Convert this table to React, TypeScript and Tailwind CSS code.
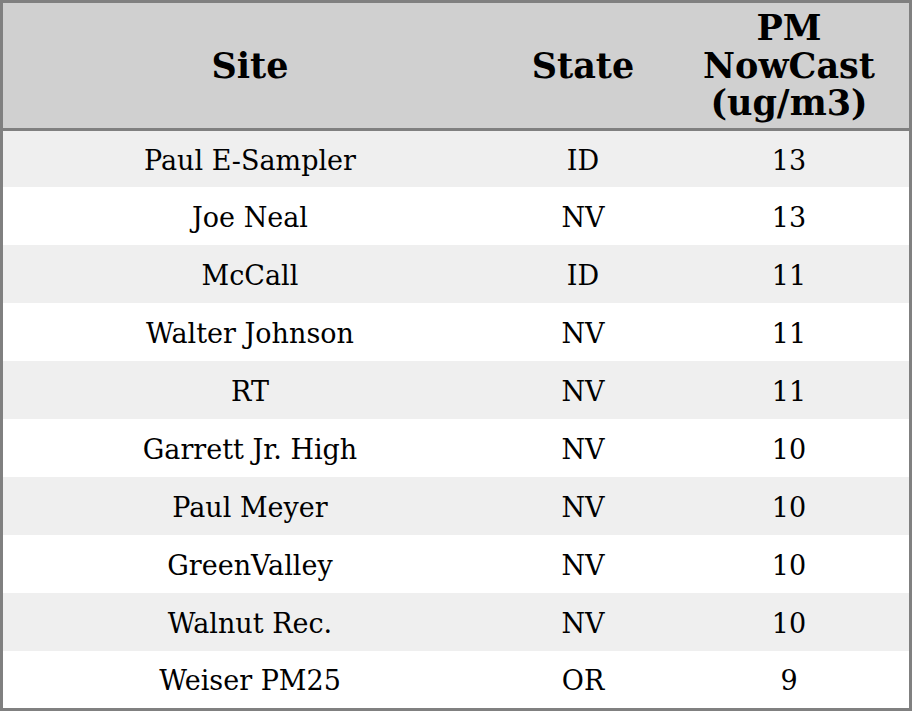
import React from "react";

const rows: [string, string, string][] = [
  ["Paul E-Sampler", "ID", "13"],
  ["Joe Neal", "NV", "13"],
  ["McCall", "ID", "11"],
  ["Walter Johnson", "NV", "11"],
  ["RT", "NV", "11"],
  ["Garrett Jr. High", "NV", "10"],
  ["Paul Meyer", "NV", "10"],
  ["GreenValley", "NV", "10"],
  ["Walnut Rec.", "NV", "10"],
  ["Weiser PM25", "OR", "9"],
];

export default function App() {
  return (
    <div className="w-[912px] h-[711px] bg-white border-[3px] border-[#808080] flex flex-col text-black [font-family:'DejaVu_Serif',serif]">
      <div className="grid grid-cols-[494px_172px_240px] h-[128px] bg-[#d0d0d0] border-b-[3px] border-[#808080] shrink-0 font-bold text-[35px] leading-[37.5px]">
        <div className="flex items-center justify-center text-center">Site</div>
        <div className="flex items-center justify-center text-center">State</div>
        <div className="flex items-center justify-center text-center">
          PM
          <br />
          NowCast
          <br />
          (ug/m3)
        </div>
      </div>
      {rows.map((r, i) => (
        <div
          key={i}
          className={`grid grid-cols-[494px_172px_240px] pt-[4px] ${i === 0 ? "h-[56px]" : i === 9 ? "h-[57px]" : "h-[58px]"} ${i % 2 === 0 ? "bg-[#efefef]" : "bg-white"} text-[27px]`}
        >
          <div className="flex items-center justify-center">{r[0]}</div>
          <div className="flex items-center justify-center">{r[1]}</div>
          <div className="flex items-center justify-center">{r[2]}</div>
        </div>
      ))}
    </div>
  );
}
